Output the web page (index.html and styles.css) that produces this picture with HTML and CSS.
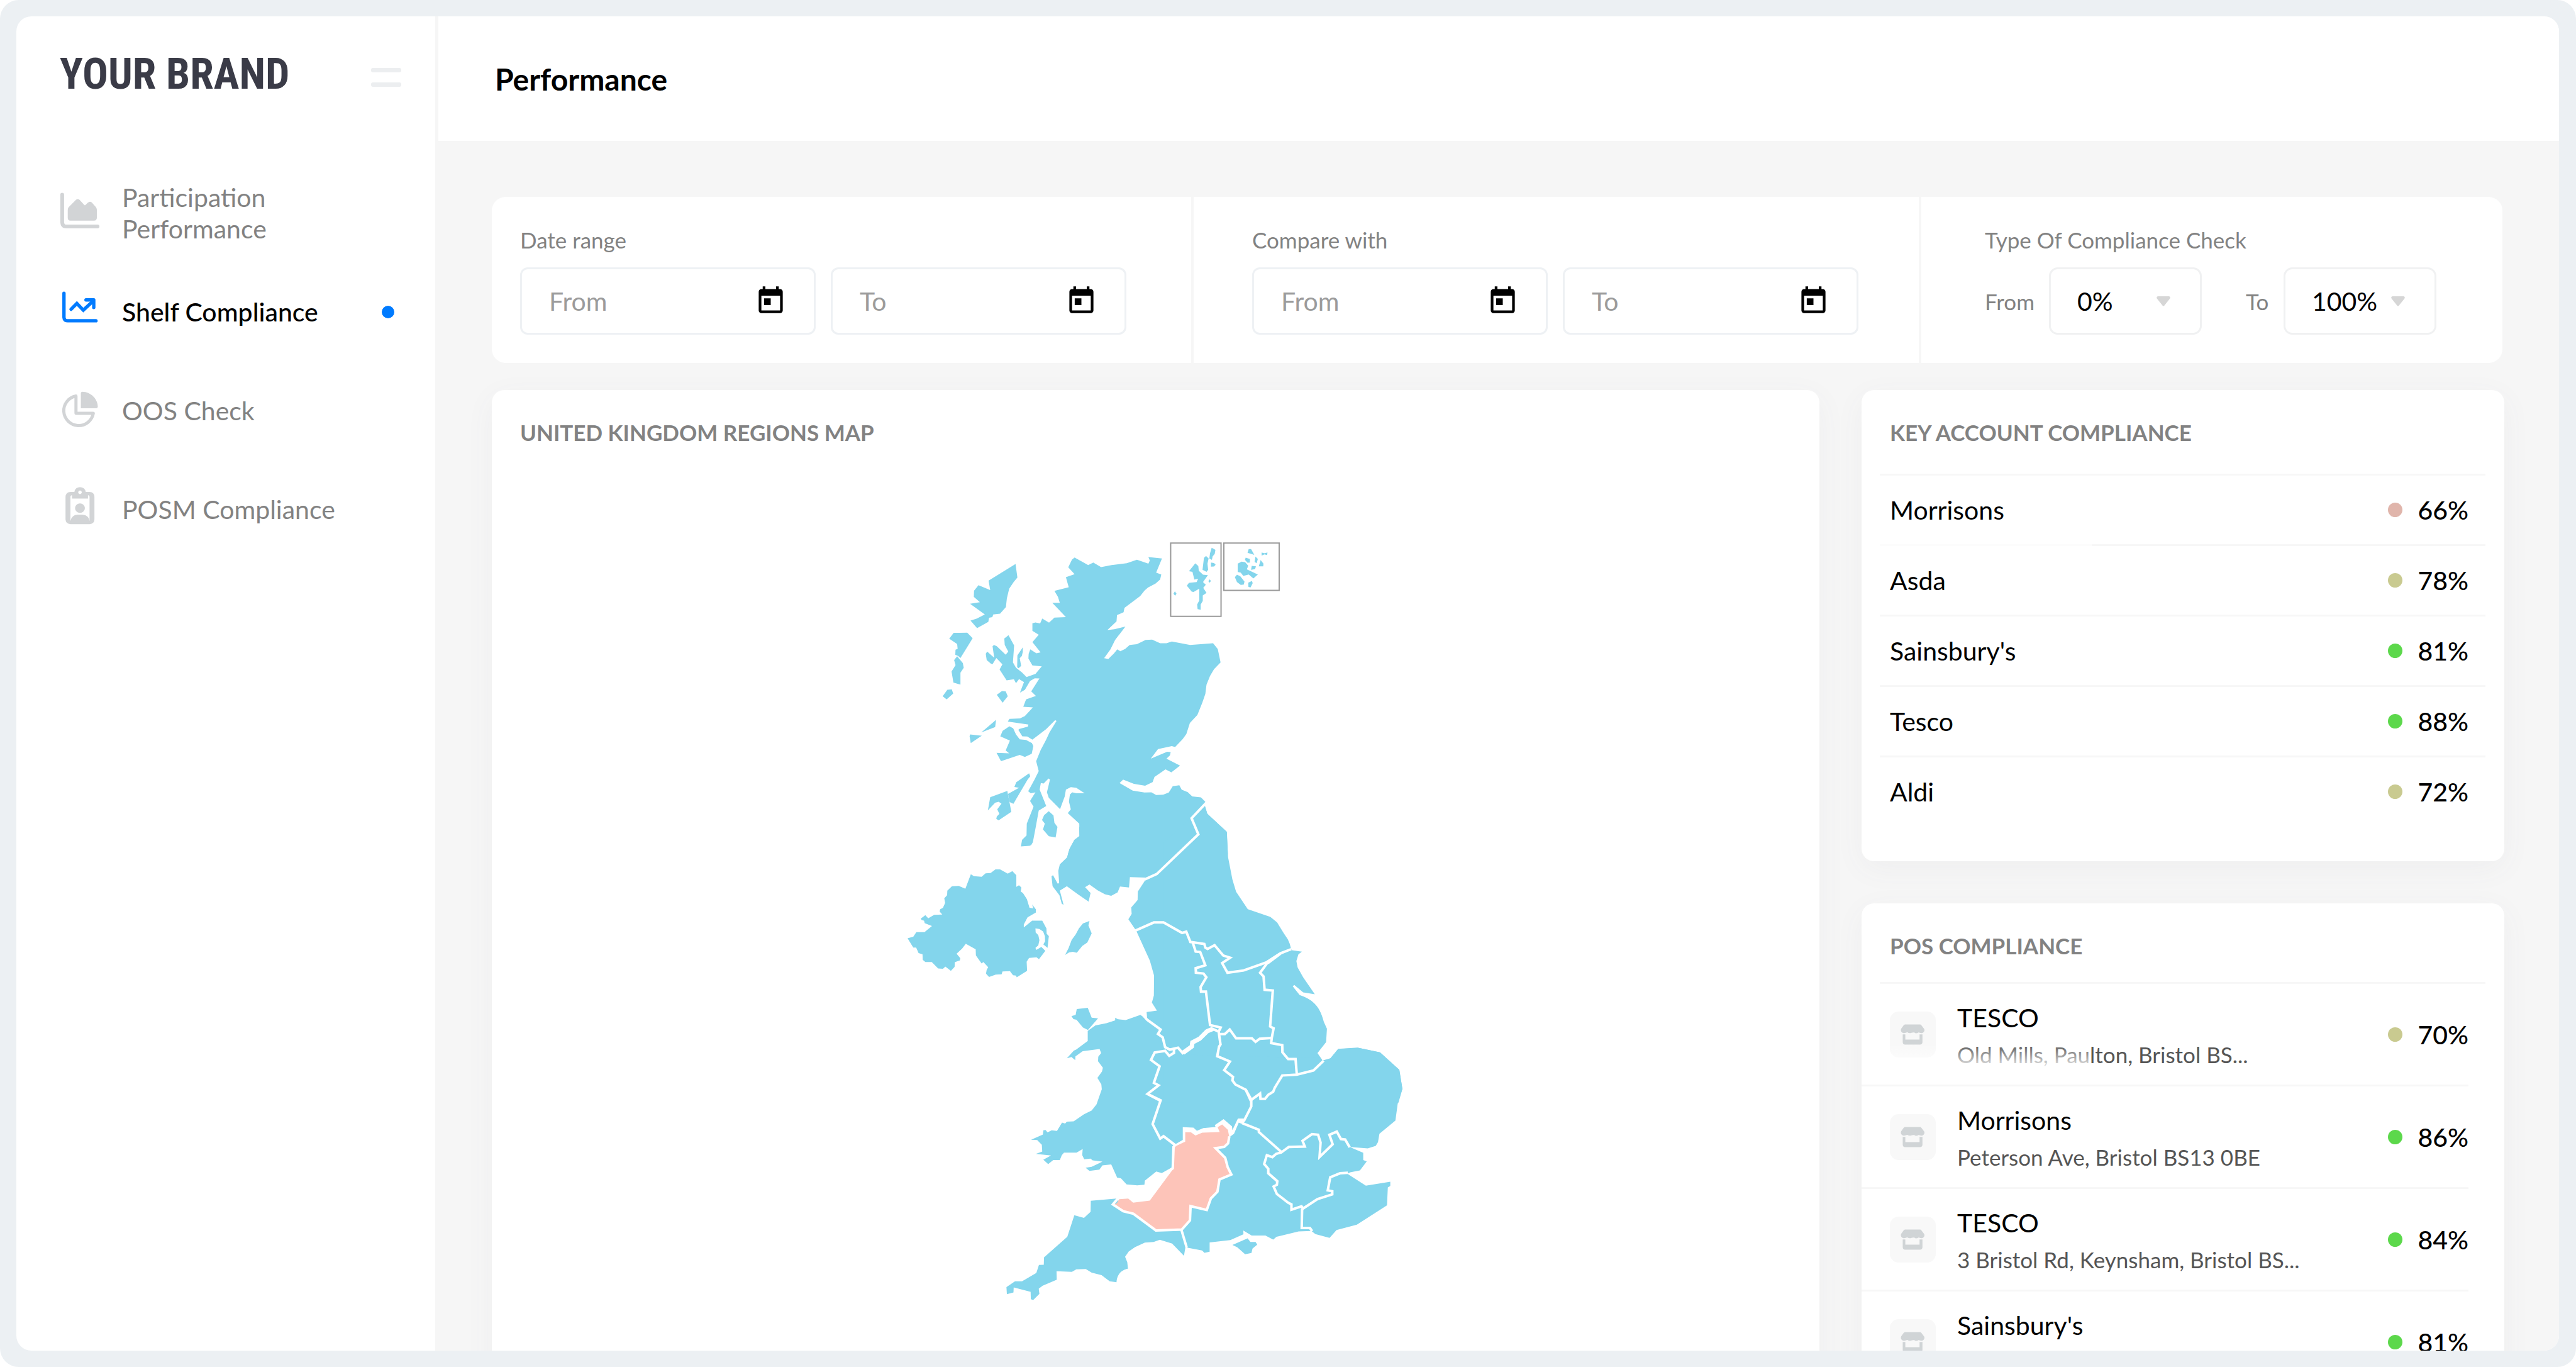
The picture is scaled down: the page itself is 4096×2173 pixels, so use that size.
FILE: index.html
```html
<!DOCTYPE html>
<html lang="en">
<head>
<meta charset="utf-8">
<title>Performance</title>
<link rel="stylesheet" href="styles.css">
</head>
<body>
<svg class="symbols" aria-hidden="true">
  <symbol id="i-calendar" viewBox="0 0 24 24"><path d="M19 3h-1V1h-2v2H8V1H6v2H5c-1.11 0-1.99.9-1.99 2L3 19c0 1.1.89 2 2 2h14c1.1 0 2-.9 2-2V5c0-1.1-.9-2-2-2zm0 16H5V8h14v11zM7 10h5v5H7z"/></symbol>
  <symbol id="i-arrow" viewBox="0 0 22 16"><path d="M2 0H20Q23 1 21 4L13 14Q11 17 9 14L1 4Q-1 1 2 0Z"/></symbol>
  <symbol id="i-shop" viewBox="75 93 300 300">
    <path d="M176 177H272Q277 177 280 181L299 206Q301 210 301 214C301 229 287 236 275 233Q268 230 261 230Q256 235 247 235Q240 235 235 230Q224 228 216 232Q210 235 205 234Q196 234 191 229Q184 229 178 232C163 237 147 229 147 214Q147 209 149 205L166 181Q170 177 176 177Z"/>
    <path d="M159 242H176V276H269V242H288V293Q287 308 272 309H174Q160 308 159 293Z"/>
  </symbol>
</svg>
<div class="shell">
  <aside class="sidebar">
    <div class="brand-row">
      <a class="brand" href="#">YOUR BRAND</a>
      <button class="menu" type="button" aria-label="Toggle menu"><span></span><span></span></button>
    </div>
    <nav class="nav">
      <a class="nav-item" href="#">
        <svg class="nav-icon" viewBox="42 65 181 181"><path d="M53 72V196Q54 215 72 215H212" fill="none" stroke="currentColor" stroke-width="17" stroke-linecap="round"/><path d="M78 140Q78 132 83 127L114 96Q123 88 132 96L152 118Q155 121 158 118L168 108Q177 100 186 107L204 127Q209 133 209 140V176Q208 189 196 189H90Q78 188 78 176Z"/></svg>
        <span>Participation Performance</span>
      </a>
      <a class="nav-item active" href="#">
        <svg class="nav-icon" viewBox="42 504 181 181"><g fill="none" stroke="currentColor" stroke-width="15" stroke-linecap="round" stroke-linejoin="round"><path d="M61 510V618Q62 634 78 634H205"/><path d="M93 582L119 556L148 586L190 547" stroke-linejoin="miter"/><path d="M160 540H195V574"/></g></svg>
        <span>Shelf Compliance</span>
        <i class="nav-dot"></i>
      </a>
      <a class="nav-item" href="#">
        <svg class="nav-icon" viewBox="42 947 181 181"><path d="M115 971A67 67 0 1 0 193 1049H115Z" fill="none" stroke="currentColor" stroke-width="14" stroke-linejoin="round"/><path d="M137 957Q138 952 144 952C182 953 213 984 213 1020Q213 1026 207 1026H137Z"/></svg>
        <span>OOS Check</span>
      </a>
      <a class="nav-item" href="#">
        <svg class="nav-icon" viewBox="42 1391 181 181"><path fill-rule="evenodd" d="M91 1402H108C110 1374 156 1374 159 1402H176Q197 1403 198 1424V1526Q197 1546 176 1547H91Q69 1546 68 1526V1424Q69 1403 91 1402ZM133 1396A8 8 0 1 0 133.1 1396ZM97 1417Q90 1416 90 1424V1533Q97 1505 122 1505H145Q172 1506 176 1533V1424Q176 1416 169 1417V1432H97ZM133 1454A22 21 0 1 1 132.9 1454Z" /></svg>
        <span>POSM Compliance</span>
      </a>
    </nav>
  </aside>
  <main class="main">
    <header class="topbar"><h1>Performance</h1></header>
    <div class="content">
      <form class="filters">
        <fieldset class="filter">
          <legend>Date range</legend>
          <div class="fields">
            <div class="field"><input type="text" placeholder="From" aria-label="Date range from"><svg class="cal"><use href="#i-calendar"/></svg></div>
            <div class="field"><input type="text" placeholder="To" aria-label="Date range to"><svg class="cal"><use href="#i-calendar"/></svg></div>
          </div>
        </fieldset>
        <fieldset class="filter">
          <legend>Compare with</legend>
          <div class="fields">
            <div class="field"><input type="text" placeholder="From" aria-label="Compare from"><svg class="cal"><use href="#i-calendar"/></svg></div>
            <div class="field"><input type="text" placeholder="To" aria-label="Compare to"><svg class="cal"><use href="#i-calendar"/></svg></div>
          </div>
        </fieldset>
        <fieldset class="filter">
          <legend>Type Of Compliance Check</legend>
          <div class="ranges">
            <label for="from-pct">From</label>
            <div class="pick"><select id="from-pct"><option>0%</option></select><svg class="arrow"><use href="#i-arrow"/></svg></div>
            <label for="to-pct">To</label>
            <div class="pick"><select id="to-pct"><option>100%</option></select><svg class="arrow"><use href="#i-arrow"/></svg></div>
          </div>
        </fieldset>
      </form>
      <div class="columns">
        <section class="card map-card">
          <h2>UNITED KINGDOM REGIONS MAP</h2>
          <svg class="map" viewBox="1957 1160 1120 1690" role="img" aria-label="Map of United Kingdom regions">
            <!-- Scotland and the northern islands -->
            <g transform="translate(2020 1160) scale(.510204 .446429)">
              <path d="M627 120L685 157 707 145 740 167 785 157 850 148 893 131 942 150 948 135 942 118 1000 125 975 194 997 203 992 228 972 248 940 267 925 282 907 308 840 366 836 387 808 401 806 432 767 474 797 470 844 457 800 522 780 568 753 611 771 615 795 588 809 568 822 577 843 566 862 547 893 543 930 522 958 521 992 538 1019 538 1042 530 1120 547 1218 538 1238 567 1250 632 1222 665 1205 698 1190 740 1185 785 1172 828 1151 888 1119 927 1104 981 1088 1006 1056 1044 1042 1040 983 1054 952 1101 1022 1067 1037 1069 1034 1085 1019 1101 1077 1135 1040 1168 1015 1153 968 1190 960 1215 928 1233 880 1224 834 1203 819 1220 875 1257 925 1266 955 1265 975 1278 1005 1277 1029 1266 1046 1235 1074 1231 1084 1252 1110 1264 1129 1285 1166 1290 1185 1311 1183 1330 1193 1370 1277 1458 1281 1568 598 1568 605 1542 626 1497 648 1478 647 1418 598 1366 611 1348 603 1310 607 1276 617 1265 635 1270 670 1270 634 1243 611 1240 590 1252 585 1285 565 1347 517 1292 509 1265 522 1203 516 1198 495 1222 483 1220 478 1252 506 1332 474 1354 462 1430 449 1508 442 1522 435 1526 398 1529 403 1497 422 1475 423 1418 452 1335 437 1307 460 1265 440 1270 429 1260 455 1205 474 1162 463 1113 482 1060 505 1010 520 973 550 917 544 913 505 958 447 1008 425 993 404 992 387 961 391 956 428 945 430 935 342 920 349 907 394 905 415 893 449 851 408 848 420 812 462 795 442 773 477 710 457 709 437 722 415 765 394 779 411 728 390 713 377 733 368 714 337 719 307 666 319 641 293 610 277 640 270 638 252 620 248 590 254 579 284 609 277 553 283 547 295 553 333 594 344 579 329 547 327 515 345 499 369 549 364 632 377 658 402 680 422 703 460 688 487 651 447 646 430 613 431 590 438 568 464 587 482 583 447 533 474 497 447 478 447 441 460 437 480 442 489 418 518 438 541 413 590 411 532 341 564 341 556 312 541 283 602 265 590 216 627 202 600 168 616 130Z"/>
              <path d="M375 152L383 218 367 240 348 272 338 320 334 362 309 394 280 398 276 411 262 414 259 434 211 465 183 428 210 418 244 398 181 346 223 338 197 312 198 282 217 255 267 279 260 233ZM111 488L169 487 192 514 140 610 130 600 118 594 119 570 128 566 126 542 92 516ZM126 602L150 635 154 658 140 682 140 740 110 730 102 676 119 645 113 620ZM84 765L103 763 109 784 81 812 64 797ZM317 771L333 773 342 797 320 828 295 790ZM406 558L406 580 402 600 393 611 399 649 388 660 382 655 383 597ZM292 912L288 947 229 973ZM181 983L231 989 184 1025 179 992ZM349 943L365 953 377 983 393 1007 420 1010 445 1025 451 1040 444 1077 415 1093 393 1083 313 1113 294 1073 348 1075 333 1061 351 1013 310 992 320 965ZM433 1172L438 1187 427 1202 366 1321 350 1313 343 1273 390 1243 370 1239 378 1216ZM340 1258L357 1360 303 1402 293 1395 295 1383 306 1370 297 1348 315 1320 303 1311 288 1316 257 1353 267 1289ZM517 1357L537 1378 541 1414 554 1434 546 1485 517 1479 492 1446 500 1418 488 1400 497 1376Z"/>
              <path d="M1212 73L1228 83 1225 103 1216 115 1213 132 1202 125 1205 100ZM1188 113L1199 125 1194 150 1197 180 1190 190 1173 180 1179 122ZM1209 145L1222 147 1229 156 1222 164 1209 165ZM1142 149L1155 162 1157 185 1175 204 1196 206 1175 240 1187 253 1176 268 1190 293 1174 305 1174 332 1165 350 1165 375 1152 372 1150 350 1159 330 1159 272 1135 288 1127 287 1106 258 1115 244 1148 240 1154 224 1138 228 1130 190 1115 187ZM1203 227L1209 235 1203 243 1198 236ZM1055 285L1062 297 1056 307 1049 297ZM1370 79L1380 79 1394 107 1365 97ZM1425 96L1437 100 1450 96 1449 108 1437 105 1425 111ZM1357 121L1375 127 1375 145 1365 146 1354 132ZM1399 116L1409 127 1404 148 1395 142ZM1421 133L1433 150 1432 163 1413 163ZM1383 161L1401 163 1397 177 1380 180ZM1340 140L1355 143 1368 160 1362 178 1409 203 1390 222 1370 203 1347 210 1336 194 1323 191 1323 150ZM1320 204L1334 212 1352 238 1349 252 1336 254 1320 240 1311 216ZM1384 235L1387 245 1378 266 1369 264 1368 243Z"/>
              <path class="inset" d="M1037 50H1252V407H1037ZM1264 50H1500V281H1264Z"/>
            </g>
            <!-- western coast, Wales, Cornwall, Northern Ireland -->
            <g transform="translate(1950 1800) scale(.478316 .669643)">
              <path d="M836 0L1350 0 1350 1368 1330 1366 1320 1365 1313 1394 1259 1354 1203 1342 1175 1349 1135 1351 1090 1366 1062 1380 1045 1397 1055 1415 1058 1436C1040 1438 1008 1448 1006 1480L975 1477 938 1457 893 1449 866 1437 823 1438 803 1446 733 1444 734 1472 670 1491 652 1501 655 1518 627 1538 616 1535 615 1511 538 1497 537 1513 507 1519 505 1496 544 1477 576 1477 641 1450 653 1424 675 1423 676 1399 782 1332 814 1262 858 1271 888 1251 889 1215 1005 1208 1030 1225 1080 1240 1175 1240 1290 1120 1258 1107 1212 1125 1187 1120 1135 1150 1133 1163 1100 1165 1052 1162 1026 1142 1009 1140 982 1097 942 1100 928 1114 883 1118 865 1108 893 1105 942 1088 897 1084 888 1078 859 1080 850 1067 852 1047 824 1059 767 1059 757 1067 748 1083 718 1083 695 1096 673 1082 708 1068 639 1063 668 1055 666 1033 645 1018 617 1017 671 1000 673 986 683 985 692 993 711 986 735 988 758 961 772 964 780 958 811 957 858 934 893 922 915 902 939 853 937 837 919 816 940 795 944 783 922 762 923 747 936 735 929 722 852 729 819 746 818 758 801 748 780 752 812 727 822 724 875 696 875 663 910 645 960 638 1000 629 1000 620 1011 625 1048 628 1115 611 1146 628 1143 602 1190 597 1167 571 1176 548 1177 483 1158 435 1096 338 1060 300 1075 283 1073 262 1102 238 1103 210 1136 174 1138 165 1067 163 1063 197 1022 194 1011 213 982 224 953 219 920 206 883 187 863 196 888 215 879 243 830 219 780 193 748 207 765 253 757 250 746 222 715 193 710 160 717 157 738 184 745 183 741 143 748 122 780 100 793 70 814 43 837 30Z"/>
              <path d="M825 592L875 588 893 620 922 622 876 660 853 652 824 627 810 625 801 615 820 611ZM883 306L878 320 893 346 873 376 850 387 825 409 807 406 790 408 772 416 788 394 802 367 820 350 835 330 853 314Z"/>
              <path d="M55 362L81 357 95 342 132 342 166 322 133 313 130 305 119 303 115 298 136 287 149 297 176 286 213 285 201 275 203 268 216 263 226 247 222 232 235 222 236 207 257 193 288 192 318 201 343 154 357 160 392 162 410 151 433 150 455 138 476 138 511 152 532 144 550 157 550 195 562 190 573 197 570 210 580 215 598 235 610 263 627 265 622 252 639 268 639 278 601 294 584 317 584 327 622 305 668 305 687 330 688 347 698 355 692 393 673 382 681 372 680 355 672 340 655 332 637 330 638 343 650 352 655 368 650 385 637 393 641 400 664 390 682 403 653 430 642 424 608 426 597 438 599 468 552 489 548 483 535 482 521 469 487 470 483 479 456 480 426 488 412 477 415 465 422 456 400 439 392 444 366 418 365 398 320 380 303 396 278 412 295 427 293 434 270 440 269 455 252 468 227 454 216 461 194 460 165 439 136 439 124 432 123 414 105 410 94 392 81 392Z"/>
            </g>
            <!-- northern and eastern England -->
            <g transform="translate(2400 1700) scale(.446429)">
              <path d="M300 300L500 120 513 160 607 247 614 372 635 480 653 540 710 625 820 663 853 690 885 742 905 772 915 795 920 815 925 825 974 832 957 845 947 878 953 909 980 957 1037 1040 980 1031 937 995 929 1001 963 1044C1020 1064 1060 1090 1081 1175L1096 1208 1092 1273 1050 1327 1075 1363 1113 1352 1151 1306 1245 1300 1355 1324 1449 1409 1464 1500 1445 1568 300 1568Z"/>
            </g>
            <!-- southern England -->
            <g transform="translate(2400 2200) scale(.446429 .382653)">
              <path d="M400 250L1060 270 1076 285 1113 272 1151 218 1250 212 1355 237 1449 336 1464 446 1441 530 1430 625 1352 700 1345 748 1334 769 1295 783 1207 775 1273 808 1273 850 1290 858 1257 909 1210 919 1195 927 1286 995 1405 973 1405 997 1393 1005 1389 1107 1242 1217 1143 1248 1109 1292 1040 1271 1020 1253 958 1256 850 1286 834 1302 796 1279 729 1279 688 1250 689 1272 625 1305 524 1318 524 1371 499 1377 487 1364 418 1349 407 1345 385 1240 400 700Z"/>
              <path d="M635 1333L709 1295 723 1316 748 1316 756 1331 733 1353 728 1378 697 1385 659 1346Z"/>
              <path class="hot" d="M345 765L400 740 400 688 433 688 455 706 488 690 570 688 560 660 585 644 616 678 620 702 614 755 595 775 553 782 600 837 612 890 630 932 572 960 562 1030 530 1068 510 1134 431 1112 428 1193 388 1245 262 1250 152 1155 103 1141 60 1102 72 1095 83 1072 127 1069 151 1092 232 1080 345 902Z"/>
              <path class="gap" d="M350 775L356 760 393 735 393 663 445 665 462 683 493 668 553 662 549 651 592 617 633 658 635 680 662 613 692 613 692 635 683 645 666 637 643 700 620 720 617 702 613 678 585 647 563 663 573 690 488 694 455 710 433 692 405 691 405 745Z"/>
              <g class="border">
                <path d="M221 474L285 510 246 645 283 728 299 714 356 765 348 775 344 897 334 905"/>
                <path d="M700 450L727 505 727 545 690 630"/>
                <path d="M683 640L764 677 764 690 875 805 910 775 988 773 977 740 1023 702 1053 706 1065 750 1060 832 1124 760 1108 706 1144 688 1164 730 1185 733 1207 777"/>
                <path d="M875 805L848 815 830 833 803 822 790 872 810 900 810 925 854 970 852 990 836 1000 852 1043 908 1093 923 1102 923 1132 972 1113 980 1125 1050 1072 1122 1045 1122 1027 1100 1022 1112 948 1160 925 1198 922"/>
                <path d="M975 1125L973 1236 1013 1236 1024 1254"/>
                <path d="M620 715L614 755 595 775 553 782 600 837 612 890 630 932 572 960 562 1030 530 1068 510 1134 431 1112 428 1193 388 1245 262 1250 152 1155 103 1141 52 1102 78 1066"/>
                <path d="M386 1245L412 1347"/>
              </g>
            </g>
            <g class="border" transform="translate(2400 1700) scale(.446429)">
              <path d="M508 106L436 182 469 260 266 454 208 480"/>
              <path d="M163 729L252 690 299 690 390 741 410 735 430 785 498 795 503 812 514 819 548 801 590 851 624 862 585 888 611 935 690 924 800 885 870 840 922 820"/>
              <path d="M805 888L770 935 787 953 792 1018 832 1022 819 1197 836 1206 827 1253 824 1278 878 1288 879 1323 907 1356 943 1356 949 1430"/>
              <path d="M442 790L456 832 478 834 503 899 456 913 457 935 494 939 508 957 480 1005 482 1027 506 1027 526 1190 578 1202 568 1222"/>
              <path d="M568 1222L540 1209 505 1222 470 1260 437 1275 432 1300 393 1327 370 1301 330 1310 307 1298 295 1250 272 1234 285 1212 220 1165 205 1148"/>
              <path class="thick" d="M540 1209L512 1220 475 1257 440 1275 437 1295 395 1325"/>
              <path d="M350 1306L350 1326 327 1340 307 1316 256 1324 238 1360 280 1391 252 1472 275 1484 221 1526 285 1560"/>
              <path d="M568 1222L577 1285 570 1295 561 1342 623 1368 595 1410 638 1443 635 1460 650 1480 700 1505 725 1560"/>
              <path d="M568 1234L598 1234 622 1212 653 1255 730 1255 748 1272 768 1257 825 1253"/>
              <path d="M727 1555L770 1524 772 1550 794 1550 810 1530 834 1515 842 1495 878 1436 949 1432 1030 1412 1080 1364"/>
              <path class="gap" d="M790 886L868 836 874 846 812 893Z"/>
            </g>
          </svg>
        </section>
        <div class="side">
          <section class="card">
            <h2>KEY ACCOUNT COMPLIANCE</h2>
            <ul class="accounts">
              <li><span>Morrisons</span><b class="score low">66%</b></li>
              <li><span>Asda</span><b class="score mid">78%</b></li>
              <li><span>Sainsbury's</span><b class="score high">81%</b></li>
              <li><span>Tesco</span><b class="score high">88%</b></li>
              <li><span>Aldi</span><b class="score mid">72%</b></li>
            </ul>
          </section>
          <section class="card pos-card">
            <h2>POS COMPLIANCE</h2>
            <ul class="stores">
              <li><span class="tile"><svg><use href="#i-shop"/></svg></span><div class="store"><h3>TESCO</h3><p>Old Mills, Paulton, Bristol BS...</p></div><b class="score mid">70%</b></li>
              <li><span class="tile"><svg><use href="#i-shop"/></svg></span><div class="store"><h3>Morrisons</h3><p>Peterson Ave, Bristol BS13 0BE</p></div><b class="score high">86%</b></li>
              <li><span class="tile"><svg><use href="#i-shop"/></svg></span><div class="store"><h3>TESCO</h3><p>3 Bristol Rd, Keynsham, Bristol BS...</p></div><b class="score high">84%</b></li>
              <li><span class="tile"><svg><use href="#i-shop"/></svg></span><div class="store"><h3>Sainsbury's</h3></div><b class="score high">81%</b></li>
            </ul>
          </section>
        </div>
      </div>
    </div>
  </main>
</div>
</body>
</html>
```
FILE: styles.css
```css
* { box-sizing: border-box; margin: 0; padding: 0; }
html { background: #fff; }
body {
  height: 100vh;
  padding: 26px 27px 26px 26px;
  background: #ecf0f3;
  border-radius: 30px;
  font-family: Lato, "Open Sans", sans-serif;
  font-size: 41px;
  color: #000;
}
html, body { overflow: hidden; }
a { color: inherit; text-decoration: none; }
ul { list-style: none; }
.symbols { position: absolute; width: 0; height: 0; }

.shell {
  display: flex;
  height: 100%;
  overflow: hidden;
  border-radius: 24px;
  background: #fff;
}

.sidebar { flex: 0 0 666px; padding: 52px 54px 0 69px; }
.brand-row { display: flex; align-items: center; justify-content: space-between; height: 80px; }
.brand {
  font: 700 68px/80px "Roboto Condensed", "Liberation Sans Narrow", "Open Sans Condensed", sans-serif;
  color: #3a3b47;
  white-space: nowrap;
}
.menu { display: grid; gap: 16px; width: 48px; padding-top: 10px; border: 0; background: none; }
.menu span { height: 7px; border-radius: 3px; background: #eceef0; }

.nav { display: grid; gap: 57px; margin-top: 131px; }
.nav-item { display: flex; align-items: center; min-height: 100px; line-height: 50px; color: #828282; }
.nav-item span { flex: 0 1 380px; }
.nav-item:first-child span { flex-basis: 260px; }
.nav-icon { flex: none; width: 64px; height: 64px; margin-right: 35px; overflow: visible; color: #d2d4d6; fill: currentColor; }
.nav-item.active { color: #000; font-weight: 500; }
.nav-item.active .nav-icon { color: #007bff; }
.nav-dot { width: 20px; height: 20px; margin: 0 11px 0 auto; border-radius: 50%; background: #007bff; }

.main { flex: 1; min-width: 0; border-left: 5px solid #f6f6f6; background: #f6f6f6; }
.topbar { display: flex; align-items: center; height: 198px; padding-left: 90px; background: #fff; }
.topbar h1 { font-size: 48px; font-weight: 700; }
.content { padding: 89px 87px 0 85px; }

.filters {
  display: grid;
  grid-template-columns: 1112fr 1157fr 928fr;
  margin-right: 3px;
  border-radius: 22px;
  background: #fff;
}
.filter { min-width: 0; height: 264px; padding: 44px 0 0 45px; border: 0; }
.filter + .filter { padding-left: 93px; border-left: 4px solid #f6f6f6; }
.filter:last-child { padding-left: 101px; }
.filter legend { float: left; width: 100%; height: 48px; margin-bottom: 20px; font-size: 35px; line-height: 48px; color: #828282; }
.fields, .ranges { clear: both; display: flex; gap: 24px; }
.field {
  display: flex;
  align-items: center;
  flex: 0 1 470px;
  min-width: 0;
  height: 107px;
  padding: 0 43px;
  border: 3px solid #eef1f4;
  border-radius: 12px;
}
.field input { flex: 1; width: 0; min-width: 0; border: 0; outline: 0; background: none; font: inherit; }
.field input::placeholder { color: #9b9b9b; opacity: 1; }
.cal { flex: none; width: 51px; height: 51px; }

.ranges { gap: 0; align-items: center; }
.ranges label { flex: 0 0 102px; font-size: 35px; color: #828282; }
.pick + label { flex-basis: 60px; margin-left: 70px; }
.pick {
  display: flex;
  align-items: center;
  flex: 0 1 243px;
  min-width: 0;
  height: 107px;
  padding: 0 47px 0 42px;
  border: 3px solid #f0f1f2;
  border-radius: 14px;
}
.pick select { flex: 1; min-width: 0; border: 0; outline: 0; appearance: none; background: none; font: inherit; color: #000; }
.arrow { flex: none; width: 22px; height: 16px; fill: #d6d6d6; }

.columns { display: grid; grid-template-columns: 2111fr 1022fr; gap: 67px; margin-top: 43px; }
.card { border-radius: 20px; background: #fff; box-shadow: 0 12px 48px rgba(90, 100, 110, .05); }
.card h2 { font-size: 35px; line-height: 48px; font-weight: 700; color: #828282; }
.map-card { padding: 43px 45px; }
.map { display: block; width: 818px; margin: 136px auto 0; fill: #83d5ec; }
.map .hot { fill: #fdc4b9; }
.map .gap { fill: #fff; }
.map .inset { fill: none; stroke: #9a9a9a; stroke-width: 2px; vector-effect: non-scaling-stroke; }
.map .border path:not(.gap) { fill: none; stroke: #fff; stroke-width: 4px; vector-effect: non-scaling-stroke; }
.map .border path.thick:not(.gap) { stroke-width: 7px; }

.side { display: grid; align-content: start; gap: 67px; }
.side h2 { margin: 0 30px 0 29px; padding: 43px 16px 42px; border-bottom: 3px solid #f7f7f7; }
.side .pos-card h2 { padding-bottom: 34px; }

.accounts { margin: 0 30px 0 29px; padding-bottom: 53px; }
.accounts li {
  display: flex;
  align-items: center;
  justify-content: space-between;
  height: 112px;
  padding: 0 27px 0 16px;
  border-bottom: 3px solid #f7f7f7;
}
.accounts li:first-child { border-image: linear-gradient(90deg, #fcfcfc 35%, #f7f7f7 35%) 1; }
.accounts li:last-child { border-bottom-color: transparent; }

.score { display: flex; align-items: center; gap: 24px; font-weight: 500; }
.score::before { content: ""; width: 23px; height: 23px; border-radius: 50%; background: #5cd84b; }
.score.mid::before { background: #c9ca90; }
.score.low::before { background: #e0b5ab; }

.stores { margin-right: 57px; }
.stores li { position: relative; display: flex; align-items: center; height: 163px; padding-left: 45px; border-bottom: 3px solid #f7f7f7; }
.tile { flex: none; width: 73px; height: 73px; margin-right: 34px; border-radius: 14px; background: #f8f8f8; }
.tile svg { display: block; width: 73px; height: 73px; fill: #d0d4d6; }
.store { flex: 1; min-width: 0; min-height: 111px; }
.store h3 { font-size: 41px; line-height: 58px; font-weight: 400; }
.store p { margin-top: 5px; font-size: 35px; line-height: 48px; color: #555; white-space: nowrap; }
.stores li:first-child::after {
  content: "";
  position: absolute;
  left: 0;
  bottom: 0;
  width: 362px;
  height: 65px;
  background: linear-gradient(rgba(255, 255, 255, 0), rgba(255, 255, 255, .75) 50%, #fff);
}
```
